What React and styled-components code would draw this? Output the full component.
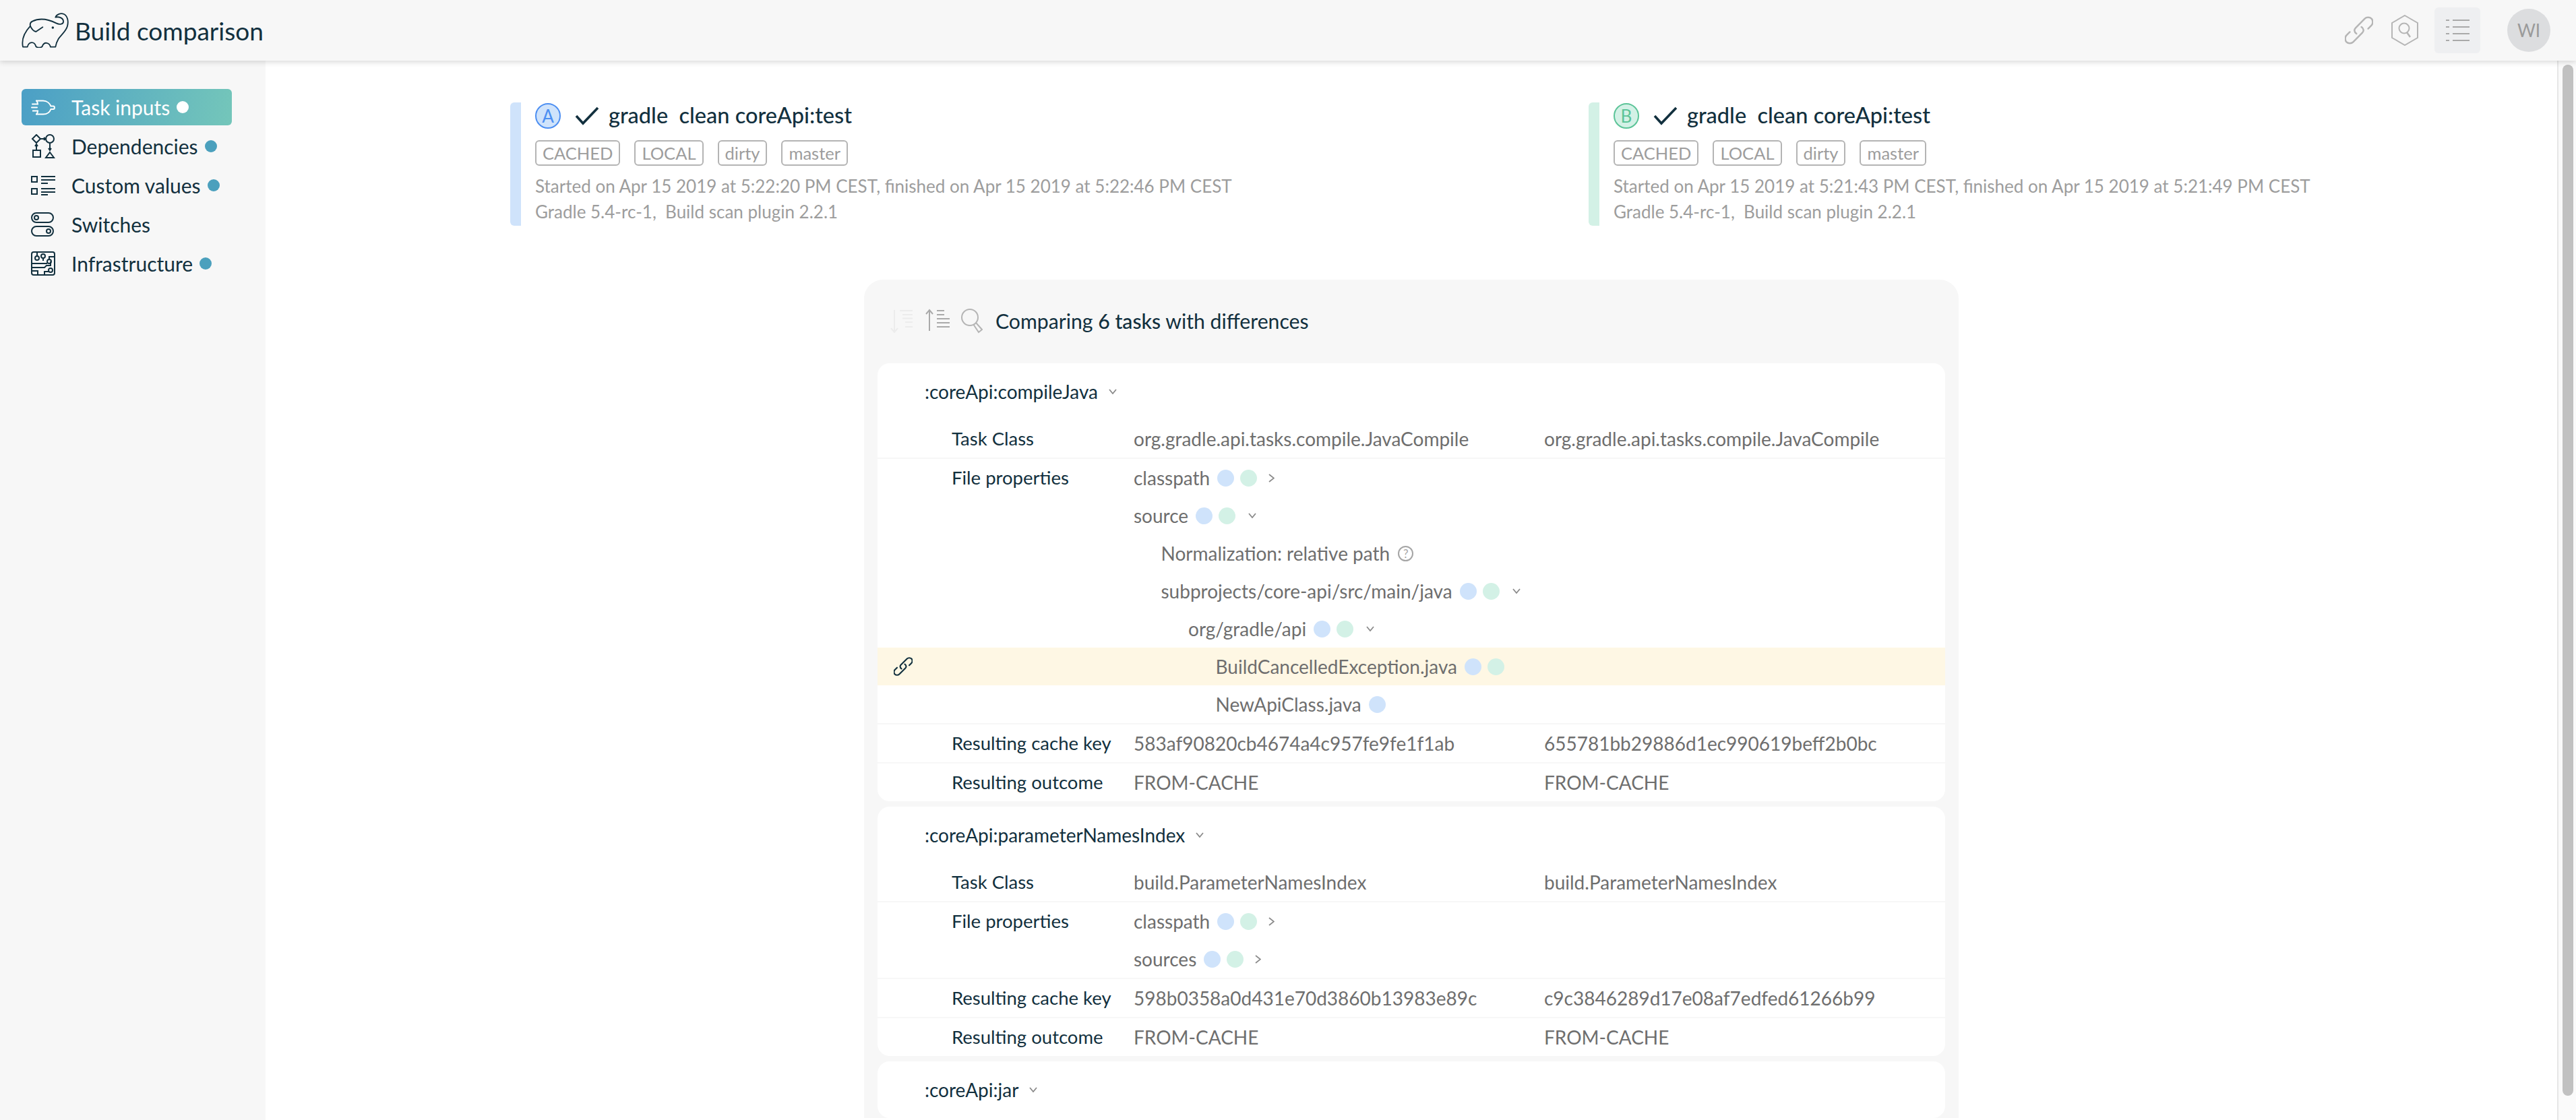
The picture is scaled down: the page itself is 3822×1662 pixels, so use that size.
import React from "react";
import styled, { createGlobalStyle } from "styled-components";

const INK = "#12303e";
const GREY = "#6e6e6e";
const FAINT = "#9d9d9d";
const BLUE = "#cfe3fb";
const GREEN = "#d3f1e6";

const GlobalStyle = createGlobalStyle`
  html, body { margin: 0; padding: 0; height: 100%; background: #fff; }
  body { font-family: Lato, "Open Sans", "Liberation Sans", sans-serif; color: ${INK}; font-variant-ligatures: common-ligatures; }
  #root { height: 100%; }
  * { box-sizing: border-box; }
`;

const Page = styled.div`
  display: flex;
  flex-direction: column;
  height: 1662px;
  overflow: hidden;
`;

const Header = styled.header`
  position: relative;
  z-index: 2;
  display: flex;
  align-items: center;
  height: 90px;
  flex-shrink: 0;
  padding: 0 38px 0 32px;
  background: #f7f7f7;
  box-shadow: 0 2px 8px rgba(0, 0, 0, 0.16);
`;

const Title = styled.h1`
  margin: 0 0 0 9px;
  font-size: 37px;
  font-weight: 400;
  color: ${INK};
  flex: 1;
`;

const HeaderTool = styled.div`
  display: flex;
  align-items: center;
  justify-content: center;
  width: 68px;
  height: 68px;
  margin-left: ${(p) => (p.active ? "10px" : "0")};
  border-radius: 6px;
  background: ${(p) => (p.active ? "#eeeff1" : "transparent")};
`;

const Avatar = styled.div`
  display: flex;
  align-items: center;
  justify-content: center;
  width: 64px;
  height: 64px;
  margin-left: 40px;
  border-radius: 50%;
  background: #dcdddf;
  color: #9a9a9a;
  font-size: 26px;
`;

const Body = styled.div`
  display: flex;
  flex: 1;
  min-height: 0;
`;

const Sidebar = styled.nav`
  display: flex;
  flex-direction: column;
  flex: 0 0 394px;
  padding: 42px 50px 0 32px;
  background: #f7f7f7;
`;

const NavItem = styled.div`
  display: flex;
  align-items: center;
  height: ${(p) => (p.active ? "54px" : "58px")};
  margin-bottom: ${(p) => (p.active ? "2px" : "0")};
  padding-left: 14px;
  border-radius: 6px;
  font-size: 30px;
  color: ${(p) => (p.active ? "#fff" : INK)};
  background: ${(p) => (p.active ? "linear-gradient(100deg, #4b9fc6, #74c6ba)" : "transparent")};
`;

const NavIcon = styled.span`
  display: flex;
  flex: 0 0 36px;
`;

const NavLabel = styled.span`
  margin-left: 24px;
`;

const NavDot = styled.span`
  width: 18px;
  height: 18px;
  margin-left: 10px;
  border-radius: 50%;
  background: ${(p) => (p.active ? "#fff" : "#4ba0bd")};
`;

const Main = styled.main`
  flex: 1;
  min-width: 0;
  overflow: hidden;
`;

const Runs = styled.section`
  display: grid;
  grid-template-columns: 1600px 1fr;
  padding: 62px 0 0 363px;
`;

const Run = styled.div`
  display: flex;
  flex-direction: column;
  height: 183px;
  padding-left: 21px;
  border-left: 16px solid ${(p) => p.color};
  border-radius: 6px;
`;

const RunTitle = styled.div`
  display: flex;
  align-items: center;
  height: 40px;
  font-size: 32.5px;
  color: ${INK};
`;

const Badge = styled.span`
  display: flex;
  align-items: center;
  justify-content: center;
  width: 38px;
  height: 38px;
  margin-right: 21px;
  border-radius: 50%;
  font-size: 26px;
  background: ${(p) => p.bg};
  color: ${(p) => p.fg};
  border: 2px solid ${(p) => p.fg};
`;

const RunName = styled.span`
  margin: 0 0 3px 14px;
  white-space: pre;
  font-weight: 500;
`;

const Tags = styled.div`
  display: flex;
  gap: 21px;
  margin-top: 16px;
`;

const Tag = styled.span`
  display: flex;
  align-items: center;
  height: 38px;
  padding: 0 9px;
  border: 2px solid #b4b4b4;
  border-radius: 6px;
  font-size: 25.5px;
  color: ${FAINT};
`;

const RunMeta = styled.div`
  font-size: 26px;
  line-height: 38px;
  color: ${FAINT};
  white-space: pre;
`;

const RunMetaFirst = styled(RunMeta)`
  margin-top: 11px;
`;

const Panel = styled.section`
  width: 1624px;
  margin: 80px 0 0 888px;
  padding: 0 20px;
  border-radius: 28px 28px 0 0;
  background: #f7f7f7;
`;

const Toolbar = styled.div`
  display: flex;
  align-items: center;
  height: 124px;
  padding: 0 0 2px 18px;
  font-size: 30.2px;
  color: ${INK};
`;

const ToolIcon = styled.span`
  display: flex;
  margin-left: ${(p) => p.gap || 0}px;
`;

const ToolbarText = styled.span`
  margin-left: 19px;
  b { font-weight: 500; }
`;

const TaskCard = styled.div`
  margin-bottom: 8px;
  border-radius: 18px;
  background: #fff;
  overflow: hidden;
`;

const TaskHeader = styled.div`
  display: flex;
  align-items: center;
  height: 84px;
  padding-left: 70px;
  font-size: 28px;
  color: ${INK};
`;

const Caret = styled.span`
  display: flex;
  margin-left: ${(p) => p.gap}px;
`;

const Row = styled.div`
  display: grid;
  grid-template-columns: 270px 609px 1fr;
  padding-left: 110px;
  border-bottom: 2px solid #f7f7f7;
  font-size: 28px;
  min-height: 56px;
  &:last-child { border-bottom: none; }
`;

const RowLabel = styled.div`
  height: 56px;
  line-height: 56px;
  font-size: 27.5px;
  color: ${INK};
`;

const RowValue = styled.div`
  height: 56px;
  line-height: 56px;
  color: ${GREY};
`;

const Tree = styled.div`
  grid-column: 2 / 4;
`;

const TreeRow = styled.div`
  position: relative;
  display: flex;
  align-items: center;
  height: 56px;
  margin-left: ${(p) => (p.highlight ? "-380px" : "0")};
  padding-left: ${(p) => p.depth * 40.5 + (p.highlight ? 380 : 0)}px;
  background: ${(p) => (p.highlight ? "#fef7e4" : "transparent")};
  color: ${GREY};
`;

const Dot = styled.span`
  width: 25px;
  height: 25px;
  margin-left: ${(p) => (p.first ? "11px" : "9px")};
  border-radius: 50%;
  background: ${(p) => p.color};
`;

const AnchorIcon = styled.span`
  position: absolute;
  left: 24px;
  top: 14px;
  display: flex;
`;

const HelpMark = styled.span`
  display: flex;
  align-items: center;
  justify-content: center;
  width: 23px;
  height: 23px;
  margin-left: 12px;
  border: 2px solid #a5a5a5;
  border-radius: 50%;
  font-size: 17px;
  color: #a5a5a5;
`;

const ScrollTrack = styled.div`
  flex: 0 0 28px;
  padding: 6px 4px 36px 6px;
  border-left: 2px solid #e7e7e7;
  background: #fafafa;
`;

const ScrollThumb = styled.div`
  height: 100%;
  border-radius: 8px;
  background: #c1c1c1;
`;

const Logo = () => (
  <svg width="70" height="52" viewBox="36 26 210 156" fill="none" stroke={INK} strokeWidth="5.5" strokeLinecap="round" strokeLinejoin="round">
    <path d="M42 178C36 150 44 118 75 85C72 74 76 68 84 64C112 50 150 52 190 72C205 80 224 78 222 62C220 48 202 42 187 46C192 32 210 26 225 32C240 40 246 62 240 85C234 108 212 124 200 142C194 152 189 166 187 178H165C160 158 136 152 128 176C120 183 108 183 100 176C94 152 68 152 62 178Z" />
    <path d="M75 85C80 96 88 108 100 110L130 90" />
    <circle cx="175" cy="92" r="2.5" fill={INK} />
  </svg>
);

const ChevronDown = () => (
  <svg width="12" height="8" viewBox="0 0 12 8" fill="none" stroke="#8b8b8b" strokeWidth="1.8">
    <path d="M1 1L6 7L11 1" />
  </svg>
);

const ChevronRight = () => (
  <svg width="9" height="13" viewBox="0 0 9 13" fill="none" stroke="#8b8b8b" strokeWidth="1.8">
    <path d="M1 1L8 6.5L1 12" />
  </svg>
);

const Check = () => (
  <svg width="36" height="30" viewBox="0 0 36 30" fill="none" stroke={INK} strokeWidth="3.6">
    <path d="M2 15L12 26L34 3" />
  </svg>
);

const Chain = ({ color, size = 42, width = 2 }) => (
  <svg width={size} height={size} viewBox="3 3 34 34" fill="none" stroke={color} strokeWidth={width} strokeLinecap="round">
    <path d="M17 24C14 22 14 19 16 17L27 6C29 4 33 4 35 6C37 8 37 12 35 14L31 18" />
    <path d="M23 16C26 18 26 21 24 23L13 34C11 36 7 36 5 34C3 32 3 28 5 26L9 22" />
  </svg>
);

const PlugIcon = () => (
  <svg width="36" height="23" viewBox="0 0 36 23" fill="none" stroke="#fff" strokeWidth="2" strokeLinecap="round">
    <path d="M8 1.5H18C24 1.5 28 6 29.5 9.5H33C35.5 9.5 35.5 14 33 14H29.5C28 18 24 21.5 18 21.5H8" />
    <path d="M8 1.5C10 3 10 5 10 6.5H2M9 11.5H1M10 16.5H2C2 16.5 10 16.5 10 16.5C10 18 10 20 8 21.5" />
  </svg>
);

const DepsIcon = () => (
  <svg width="36" height="36" viewBox="0 0 36 36" fill="none" stroke={INK} strokeWidth="2">
    <path d="M8 1L14 7L8 13L2 7Z" />
    <circle cx="28" cy="7" r="6" />
    <rect x="3" y="24" width="11" height="10" />
    <path d="M28 27L34 35H22Z" />
    <path d="M14 7H22M19 5L22 7L19 9M8 24V15M6 18L8 15L10 18M28 13V24M26 21L28 24L30 21" />
  </svg>
);

const ValuesIcon = () => (
  <svg width="36" height="30" viewBox="0 0 36 30" fill="none" stroke={INK} strokeWidth="2">
    <rect x="1" y="2" width="8" height="8" />
    <rect x="1" y="20" width="8" height="8" />
    <path d="M15 2H36M15 7H36M15 12H25M15 20H36M15 25H36M15 29H25" />
  </svg>
);

const SwitchIcon = () => (
  <svg width="34" height="36" viewBox="0 0 34 36" fill="none" stroke={INK} strokeWidth="2">
    <rect x="1" y="1" width="32" height="14" rx="7" />
    <circle cx="8" cy="8" r="3" />
    <rect x="1" y="21" width="32" height="14" rx="7" />
    <circle cx="26" cy="28" r="3" />
  </svg>
);

const BoardIcon = () => (
  <svg width="36" height="36" viewBox="0 0 36 36" fill="none" stroke={INK} strokeWidth="2">
    <rect x="1" y="1" width="34" height="34" rx="3" />
    <circle cx="9" cy="10" r="3" />
    <circle cx="18" cy="7" r="3" />
    <circle cx="27" cy="15" r="3" />
    <circle cx="29" cy="28" r="3" />
    <path d="M1 18H24M1 24H20L23 21H29V15M1 29H10V35M20 35V30H26M9 7V1M18 10V14M27 12V8H35" />
  </svg>
);

const HexSearch = () => (
  <svg width="40" height="46" viewBox="0 0 40 46" fill="none" stroke="#b5b5b5" strokeWidth="2">
    <path d="M20 1L39 12V34L20 45L1 34V12Z" />
    <circle cx="19" cy="20" r="7.5" />
    <path d="M23 26L28 33" strokeWidth="2.5" />
  </svg>
);

const OutlineIcon = () => (
  <svg width="35" height="32" viewBox="0 0 35 32" fill="none" stroke="#a9a9a9" strokeWidth="2">
    <path d="M0 1H5M10 1H35M0 11H5M10 11H35M0 21H5M10 21H35M0 31H5M10 31H35" />
  </svg>
);

const SortDown = () => (
  <svg width="34" height="36" viewBox="0 0 34 36" fill="none" stroke="#ececec" strokeWidth="2">
    <path d="M7 2V35M2 29L7 35L12 29M15 3H34M19 9H34M19 14.5H34M23 20H34M23 27H34" />
  </svg>
);

const SortUp = () => (
  <svg width="38" height="36" viewBox="0 0 38 36" fill="none" stroke="#aaa" strokeWidth="2">
    <path d="M7 2V33M2 8L7 2L12 8M18 3H29M18 9H29M18 15H37M18 21H37M18 27H37" />
  </svg>
);

const Magnifier = () => (
  <svg width="34" height="38" viewBox="0 0 34 38" fill="none" stroke="#b5b5b5" strokeWidth="2">
    <circle cx="15" cy="14" r="12" />
    <path d="M20 24L28 36L33 32L24 22" />
  </svg>
);

const Node = ({ depth, name, a, b, open, help, highlight }) => (
  <TreeRow depth={depth} highlight={highlight}>
    {highlight && <AnchorIcon><Chain color={INK} size={28} width={2.6} /></AnchorIcon>}
    <span>{name}</span>
    {help && <HelpMark>?</HelpMark>}
    {a && <Dot first color={BLUE} />}
    {b && <Dot color={GREEN} />}
    {open === true && <Caret gap={19}><ChevronDown /></Caret>}
    {open === false && <Caret gap={17}><ChevronRight /></Caret>}
  </TreeRow>
);

const runs = [
  { letter: "A", bar: BLUE, fg: "#4d8ff2", started: "5:22:20", finished: "5:22:46" },
  { letter: "B", bar: GREEN, fg: "#5cc498", started: "5:21:43", finished: "5:21:49" },
];

const App = () => (
  <Page>
    <GlobalStyle />
    <Header>
      <Logo />
      <Title>Build comparison</Title>
      <HeaderTool><Chain color="#b5b5b5" /></HeaderTool>
      <HeaderTool><HexSearch /></HeaderTool>
      <HeaderTool active><OutlineIcon /></HeaderTool>
      <Avatar>WI</Avatar>
    </Header>
    <Body>
      <Sidebar>
        <NavItem active><NavIcon><PlugIcon /></NavIcon><NavLabel>Task inputs</NavLabel><NavDot active /></NavItem>
        <NavItem><NavIcon><DepsIcon /></NavIcon><NavLabel>Dependencies</NavLabel><NavDot /></NavItem>
        <NavItem><NavIcon><ValuesIcon /></NavIcon><NavLabel>Custom values</NavLabel><NavDot /></NavItem>
        <NavItem><NavIcon><SwitchIcon /></NavIcon><NavLabel>Switches</NavLabel></NavItem>
        <NavItem><NavIcon><BoardIcon /></NavIcon><NavLabel>Infrastructure</NavLabel><NavDot /></NavItem>
      </Sidebar>
      <Main>
        <Runs>
          {runs.map((r) => (
            <Run key={r.letter} color={r.bar}>
              <RunTitle>
                <Badge bg={r.bar} fg={r.fg}>{r.letter}</Badge>
                <Check />
                <RunName>{"gradle  clean coreApi:test"}</RunName>
              </RunTitle>
              <Tags>
                <Tag>CACHED</Tag><Tag>LOCAL</Tag><Tag>dirty</Tag><Tag>master</Tag>
              </Tags>
              <RunMetaFirst>{`Started on Apr 15 2019 at ${r.started} PM CEST, finished on Apr 15 2019 at ${r.finished} PM CEST`}</RunMetaFirst>
              <RunMeta>{"Gradle 5.4-rc-1,  Build scan plugin 2.2.1"}</RunMeta>
            </Run>
          ))}
        </Runs>
        <Panel>
          <Toolbar>
            <ToolIcon><SortDown /></ToolIcon>
            <ToolIcon gap={18}><SortUp /></ToolIcon>
            <ToolIcon gap={14}><Magnifier /></ToolIcon>
            <ToolbarText>Comparing <b>6 tasks</b> with differences</ToolbarText>
          </Toolbar>

          <TaskCard>
            <TaskHeader>:coreApi:compileJava<Caret gap={16}><ChevronDown /></Caret></TaskHeader>
            <Row>
              <RowLabel>Task Class</RowLabel>
              <RowValue>org.gradle.api.tasks.compile.JavaCompile</RowValue>
              <RowValue>org.gradle.api.tasks.compile.JavaCompile</RowValue>
            </Row>
            <Row>
              <RowLabel>File properties</RowLabel>
              <Tree>
                <Node depth={0} name="classpath" a b open={false} />
                <Node depth={0} name="source" a b open />
                <Node depth={1} name="Normalization: relative path" help />
                <Node depth={1} name="subprojects/core-api/src/main/java" a b open />
                <Node depth={2} name="org/gradle/api" a b open />
                <Node depth={3} name="BuildCancelledException.java" a b highlight />
                <Node depth={3} name="NewApiClass.java" a />
              </Tree>
            </Row>
            <Row>
              <RowLabel>Resulting cache key</RowLabel>
              <RowValue>583af90820cb4674a4c957fe9fe1f1ab</RowValue>
              <RowValue>655781bb29886d1ec990619beff2b0bc</RowValue>
            </Row>
            <Row>
              <RowLabel>Resulting outcome</RowLabel>
              <RowValue>FROM-CACHE</RowValue>
              <RowValue>FROM-CACHE</RowValue>
            </Row>
          </TaskCard>

          <TaskCard>
            <TaskHeader>:coreApi:parameterNamesIndex<Caret gap={16}><ChevronDown /></Caret></TaskHeader>
            <Row>
              <RowLabel>Task Class</RowLabel>
              <RowValue>build.ParameterNamesIndex</RowValue>
              <RowValue>build.ParameterNamesIndex</RowValue>
            </Row>
            <Row>
              <RowLabel>File properties</RowLabel>
              <Tree>
                <Node depth={0} name="classpath" a b open={false} />
                <Node depth={0} name="sources" a b open={false} />
              </Tree>
            </Row>
            <Row>
              <RowLabel>Resulting cache key</RowLabel>
              <RowValue>598b0358a0d431e70d3860b13983e89c</RowValue>
              <RowValue>c9c3846289d17e08af7edfed61266b99</RowValue>
            </Row>
            <Row>
              <RowLabel>Resulting outcome</RowLabel>
              <RowValue>FROM-CACHE</RowValue>
              <RowValue>FROM-CACHE</RowValue>
            </Row>
          </TaskCard>

          <TaskCard>
            <TaskHeader>:coreApi:jar<Caret gap={16}><ChevronDown /></Caret></TaskHeader>
          </TaskCard>
        </Panel>
      </Main>
      <ScrollTrack><ScrollThumb /></ScrollTrack>
    </Body>
  </Page>
);

export default App;
